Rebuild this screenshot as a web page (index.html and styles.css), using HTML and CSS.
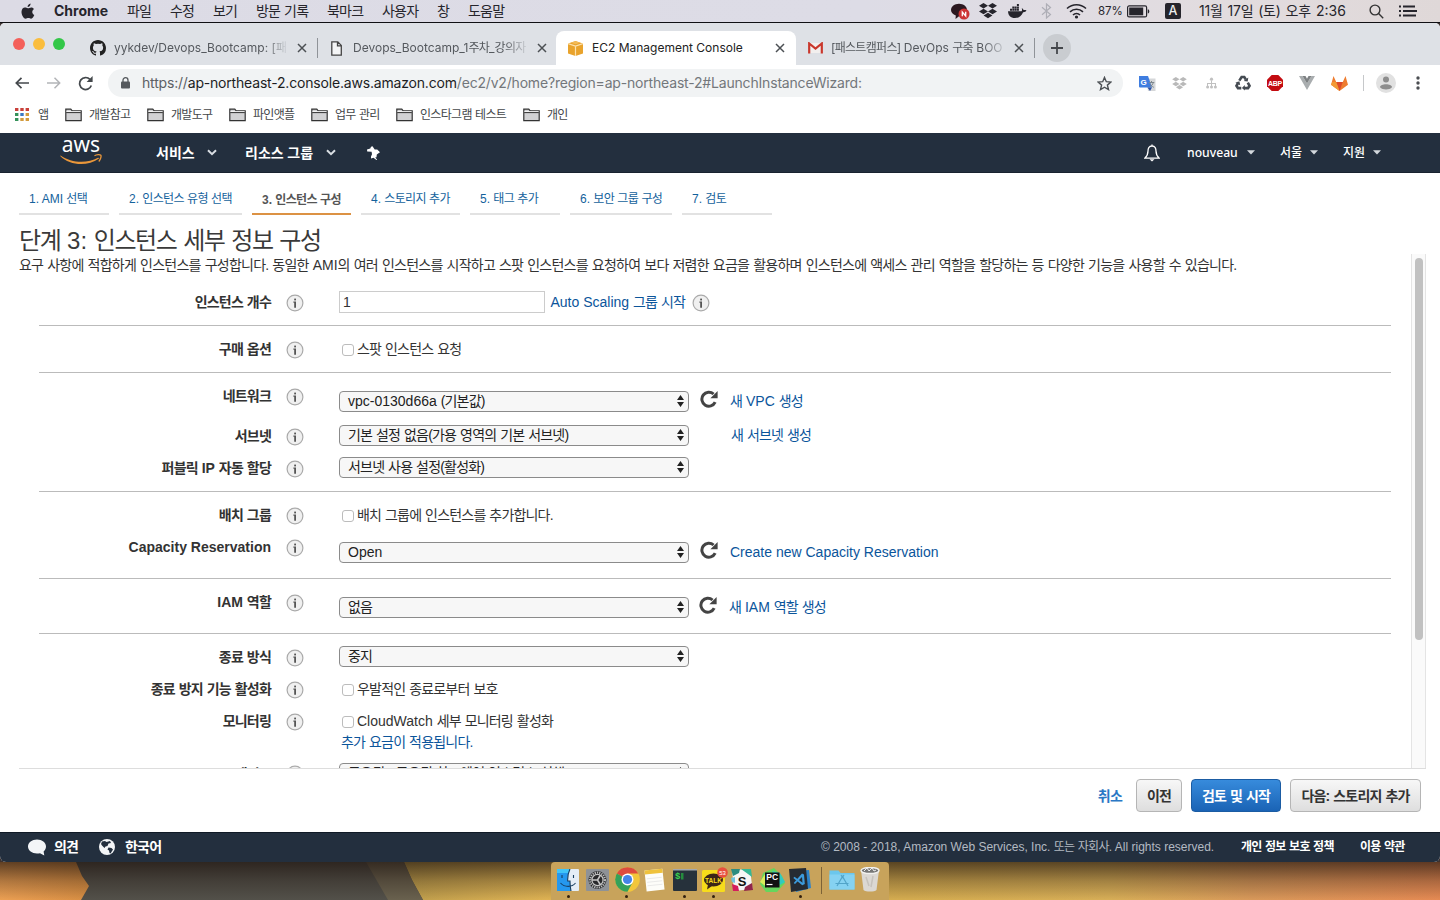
FILE: index.html
```html
<!DOCTYPE html>
<html lang="ko">
<head>
<meta charset="utf-8">
<title>EC2 Management Console</title>
<link rel="stylesheet" href="styles.css">
</head>
<body>
<svg width="0" height="0" class="defs">
  <defs>
    <symbol id="info" viewBox="0 0 18 18"><circle cx="9" cy="9" r="7.900" fill="#f0f0f0" stroke="#aaa" stroke-width="1.200"/><rect x="8.200" y="4.600" width="1.800" height="1.800" fill="#555"/><path d="M7.400 7.600h2.600v6.200H8.200V8.700h-.8z" fill="#555"/></symbol>
    <symbol id="reload" viewBox="0 0 18 18"><path d="M15.2 12.2A7 7 0 1 1 13.6 4" fill="none" stroke="#444" stroke-width="3"/><path d="M17.6 1v7.2h-7.2z" fill="#444"/></symbol>
    <symbol id="updown" viewBox="0 0 7 12"><path d="M3.500 0L7 5H0zM3.500 12L7 7H0z" fill="#222"/></symbol>
    <symbol id="folder" viewBox="0 0 17 14"><path d="M.8 12.6V1.2h5l1.4 1.600h9v9.8z" fill="#d2d2d4" stroke="#333" stroke-width="1.2"/><path d="M1.200 4.600h14.6" stroke="#333" stroke-width="1"/><path d="M1.400 3.500h4.500l1 0h8.700" stroke="#fff" stroke-width=".8"/></symbol>
    <symbol id="x" viewBox="0 0 10 10"><path d="M1 1l8 8M9 1L1 9" stroke="#4c5054" stroke-width="1.5"/></symbol>
    <symbol id="dropbox" viewBox="0 0 18 16"><path d="M4.5 0L9 2.8 4.5 5.600 0 2.800zM13.500 0L18 2.800l-4.500 2.800L9 2.800zM4.500 5.700L9 8.500l-4.500 2.800L0 8.500zM13.500 5.700L18 8.500l-4.500 2.800L9 8.500zM9 9.700l4.400 2.800L9 15.300l-4.400-2.800z"/></symbol>
    <symbol id="chev" viewBox="0 0 10 7"><path d="M1 1.2l4 4 4-4" fill="none" stroke="#d8dde2" stroke-width="2"/></symbol>
    <symbol id="caret" viewBox="0 0 8 5"><path d="M0 .3h8L4 4.6z" fill="#d3d8dd"/></symbol>
  </defs>
</svg>

<header class="menubar k">
  <svg width="14" height="17" viewBox="0 0 14 17"><path d="M9.6.4c.1 1.700-1.200 3.500-3 3.500C6.400 2.200 8 .6 9.600.4zM13.300 12c-.7 1.700-1.800 3.700-3.200 3.700-1 0-1.500-.6-2.700-.6s-1.800.6-2.700.6C2.900 15.700.4 12.100.5 8.700.6 6 2.200 4.500 3.900 4.500c1.200 0 2 .7 3 .7.900 0 1.900-.8 3.400-.8 1.100 0 2.100.6 2.700 1.500-2.500 1.500-2.100 4.900.3 6.100z" fill="#26252c"/></svg>
  <b class="l app">Chrome</b>
  <span>파일</span><span>수정</span><span>보기</span><span>방문 기록</span><span>북마크</span><span>사용자</span><span>창</span><span>도움말</span>
  <svg width="19" height="17" viewBox="0 0 19 17"><path d="M8 .8c4.500 0 8 2.800 8 6.300s-3.500 6.200-8 6.200L4.500 16l.3-3.500C2 11.300 0 9.400 0 7 0 3.600 3.600.8 8 .8z" fill="#2b1820"/><circle cx="13" cy="11" r="5.500" fill="#cc3434"/><path d="M11.300 13.300V9l3.400 4V8.700" fill="none" stroke="#fff" stroke-width="1.300"/></svg>
  <svg width="18" height="16" fill="#26252c"><use href="#dropbox"/></svg>
  <svg width="19" height="16" viewBox="0 0 19 16" fill="#26252c"><path d="M0 8.200h13.600c.6-.8.600-2 .1-3 1.200.3 1.700 1 1.800 1.900 1-.2 2-.1 3 .4-.7 1.300-2 1.800-3.400 1.700C13.500 13 11 15 7 15 2.500 15 .3 12.500 0 8.200z"/><path d="M2 5.700h2v2H2zM4.300 5.700h2v2h-2zM6.600 5.700h2v2h-2zM8.900 5.700h2v2h-2zM4.300 3.400h2v2h-2zM6.600 3.400h2v2h-2zM8.900 3.400h2v2h-2zM8.900 1.100h2v2h-2z"/></svg>
  <svg width="11" height="16" viewBox="0 0 11 16"><path d="M1 4.300l8.500 7.200-4 3.500V1l4 3.500L1 11.700" fill="none" stroke="#aeaeb6" stroke-width="1.200"/></svg>
  <svg width="21" height="16" viewBox="0 0 21 16" fill="none" stroke="#26252c" stroke-width="1.600"><path d="M1 5.500c5.500-5 13.500-5 19 0M4 8.800c3.800-3.400 9.200-3.400 13 0M7 12c2-1.800 5-1.800 7 0"/><circle cx="10.500" cy="14" r=".8" fill="#26252c"/></svg>
  <span class="l pct">87%</span>
  <svg width="23" height="13" viewBox="0 0 23 13"><rect x=".6" y=".9" width="19" height="11" rx="1.500" fill="none" stroke="#26252c" stroke-width="1.200"/><rect x="2.200" y="2.500" width="14" height="7.800" fill="#26252c"/><path d="M20.800 4.300c2 .3 2 4 0 4.300z" fill="#26252c"/></svg>
  <span class="abox l">A</span>
  <span class="date">11월 17일 (토) 오후</span>
  <span class="l clock">2:36</span>
  <svg width="15" height="15" viewBox="0 0 15 15" fill="none" stroke="#333" stroke-width="1.400"><circle cx="6" cy="6" r="4.900"/><path d="M9.600 9.600l4.600 4.600"/></svg>
  <svg width="18" height="12" viewBox="0 0 18 12" stroke="#26252c" stroke-width="1.800"><path d="M0 1.500h2M0 6h2M0 10.500h2M4 1.500h12M4 6h14M4 10.500h13"/></svg>
</header>

<div class="window">
<div class="strip">
  <i class="light red"></i><i class="light yel"></i><i class="light grn"></i>
  <div class="tab t1">
    <svg width="16" height="16" viewBox="0 0 16 16"><path d="M8 0C3.580 0 0 3.580 0 8c0 3.540 2.290 6.530 5.470 7.590.4.070.55-.17.55-.38v-1.500c-2.010.37-2.530-.49-2.690-.94-.09-.23-.48-.94-.82-1.130-.28-.15-.68-.52-.01-.53.63-.01 1.080.58 1.230.82.72 1.210 1.870.87 2.330.66.070-.52.280-.87.510-1.070-1.780-.2-3.640-.89-3.640-3.950 0-.87.310-1.590.82-2.150-.08-.2-.36-1.020.08-2.120 0 0 .67-.21 2.200.82a7.600 7.600 0 014 0c1.530-1.040 2.200-.82 2.200-.82.440 1.100.160 1.920.080 2.120.51.560.82 1.270.82 2.150 0 3.070-1.870 3.750-3.650 3.950.29.250.54.730.54 1.480v2.200c0 .21.150.46.550.38A8 8 0 0016 8c0-4.420-3.580-8-8-8z" fill="#222"/></svg>
    <span class="title fade">yykdev/Devops_Bootcamp: [패</span><svg width="10" height="10"><use href="#x"/></svg></div>
  <div class="tab t2">
    <svg width="11" height="15" viewBox="0 0 11 15"><path d="M.8.800h6l3.500 3.600v9.700H.8zM6.500.8v4h4" fill="#f4f5f6" stroke="#444" stroke-width="1.300"/></svg>
    <span class="title fade">Devops_Bootcamp_1<span class="k">주차</span>_<span class="k">강의자</span></span><svg width="10" height="10"><use href="#x"/></svg></div>
  <div class="tab t3">
    <svg width="15" height="15" viewBox="0 0 15 15"><path d="M0 2.500L7.500 0 15 2.500v10L7.500 15 0 12.500z" fill="#e9a32c"/><path d="M0 2.500L7.500 5 15 2.500M7.500 5v10" stroke="#fbe1ae" stroke-width="1.200" fill="none"/><path d="M3 1.700l4.500 1.500L12 1.700 7.500.2z" fill="#f3bb58"/></svg>
    <span class="title">EC2 Management Console</span><svg width="10" height="10"><use href="#x"/></svg></div>
  <div class="tab t4">
    <svg width="15" height="12" viewBox="0 0 15 12"><path d="M2 1h11v10H2z" fill="#f2efee"/><path d="M1.200 11.500V1.500l6.300 5 6.300-5v10" fill="none" stroke="#c9372c" stroke-width="2.200"/></svg>
    <span class="title fade"><span class="k">[패스트캠퍼스]</span> DevOps <span class="k">구축</span> BOO</span><svg width="10" height="10"><use href="#x"/></svg></div>
  <div class="plus"><svg width="12" height="12" viewBox="0 0 12 12"><path d="M6 0v12M0 6h12" stroke="#44474b" stroke-width="1.800"/></svg></div>
</div>

<div class="toolbar">
  <svg width="14" height="12" viewBox="0 0 14 12" fill="none" stroke="#44484c" stroke-width="1.700"><path d="M14 6H1.500M6.500.8L1.300 6l5.200 5.200"/></svg>
  <svg width="14" height="12" viewBox="0 0 14 12" fill="none" stroke="#b3b5b8" stroke-width="1.500"><path d="M0 6h12.500M7.500.8L12.700 6l-5.200 5.200"/></svg>
  <svg width="16" height="15" viewBox="0 0 16 15"><path d="M13.300 9.500A6 6 0 1 1 12 3.400" fill="none" stroke="#44484c" stroke-width="1.700"/><path d="M14.600 0v6H8.600z" fill="#44484c"/></svg>
  <div class="omni">
    <svg width="9" height="12" viewBox="0 0 9 12"><rect y="4.500" width="9" height="7" rx="1" fill="#55595d"/><path d="M2 5V3.200a2.500 2.500 0 015 0V5" fill="none" stroke="#55595d" stroke-width="1.300"/></svg>
    <span class="url"><span class="dim">https://</span><span class="host">ap-northeast-2.console.aws.amazon.com</span>/ec2/v2/home?region=ap-northeast-2#LaunchInstanceWizard:</span>
    <svg width="15" height="15" viewBox="0 0 15 15"><path d="M7.500 1.400l1.800 4.300 4.600.4-3.500 3 1.100 4.500-4-2.400-4 2.400 1.100-4.500-3.500-3 4.600-.4z" fill="none" stroke="#4c5054" stroke-width="1.400"/></svg>
  </div>
  <svg width="17" height="17" viewBox="0 0 17 17"><path d="M7 3.500h9.500V16H9z" fill="#d5d7d9"/><path d="M0 1h9l4 11.500H1a1 1 0 01-1-1z" fill="#3f7de0"/><path d="M8.500 12.500H13L11 16z" fill="#2b50a8"/><text x="1.600" y="9.600" class="gtxt">G</text><path d="M9.800 7.500h5.500M12.500 6v1.500M14.300 7.500c-.5 2-2 3.500-3.300 4.500M11 8.500c.8 1.800 2 3 3.800 3.800" fill="none" stroke="#7d868d"/></svg>
  <svg width="15" height="13" fill="#b9b9b9"><use href="#dropbox"/></svg>
  <svg width="11" height="12" viewBox="0 0 11 12" fill="#c0c0c0"><circle cx="5.500" cy="2.200" r="1.600"/><path d="M5 3.500h1V6h4v3H9V7H6v2H5V7H2v2H1V6h4z"/><circle cx="1.600" cy="9.900" r="1.500"/><circle cx="5.500" cy="9.900" r="1.500"/><circle cx="9.400" cy="9.900" r="1.500"/></svg>
  <svg width="16" height="16" viewBox="0 0 16 16" fill="none" stroke="#454b52" stroke-width="2.600"><path d="M4.300 5.600L6.600 2h2.700l1.600 2.700M12.800 7.600l1.700 3.200-1.500 2.300H9M6.300 13.100H3l-1.500-2.300 1.900-3.400"/><path d="M8.700 6l4 .6.600-4zM9.800 10v5.600L6.900 12.900zM.4 7.700l4-1.500.8 4z" fill="#454b52" stroke="none"/></svg>
  <svg width="16" height="16" viewBox="0 0 16 16"><path d="M4.700 0h6.600L16 4.700v6.600L11.300 16H4.700L0 11.300V4.700z" fill="#c30c11"/><text x="8" y="10.900" class="abp">ABP</text></svg>
  <svg width="16" height="14" viewBox="0 0 16 14"><path d="M0 0h3.500L8 7.600 12.500 0H16L8 14z" fill="#a9adaf"/><path d="M3.500 0h3L8 2.700 9.500 0h3L8 7.600z" fill="#7d8183"/></svg>
  <svg width="17" height="15" viewBox="0 0 17 15"><path d="M8.500 15L0 8.700 2.500 0l2.700 6h6.600l2.700-6L17 8.700z" fill="#ee7d30"/><path d="M5.200 6h6.600L8.500 15z" fill="#dd4a2a"/><path d="M0 8.700L1.300 6h3.900L8.500 15zM17 8.700L15.700 6" fill="#f29a35"/></svg>
  <i class="vsep"></i>
  <svg width="20" height="20" viewBox="0 0 20 20"><circle cx="10" cy="10" r="10" fill="#e1e1e1"/><circle cx="10" cy="6.500" r="3" fill="#8d8d8d"/><path d="M4 14.200c0-4 12-4 12 0-2.500 3-9.500 3-12 0z" fill="#8d8d8d"/></svg>
  <svg width="4" height="14" viewBox="0 0 4 14" fill="#4b4e52"><circle cx="2" cy="2" r="1.700"/><circle cx="2" cy="7" r="1.700"/><circle cx="2" cy="12" r="1.700"/></svg>
</div>

<div class="bookmarks k">
  <svg width="14" height="13" viewBox="0 0 14 13"><path d="M0 0h3.400v3H0zM5.300 0h3.400v3H5.300zM10.600 0H14v3h-3.400z" fill="#c9403a"/><path d="M0 5h3.400v3H0z" fill="#35925a"/><path d="M5.300 5h3.400v3H5.300z" fill="#3a79c4"/><path d="M10.600 5H14v3h-3.400z" fill="#d39b3c"/><path d="M0 10h3.400v3H0z" fill="#35925a"/><path d="M5.300 10h3.400v3H5.300zM10.600 10H14v3h-3.400z" fill="#d39b3c"/></svg><span>앱</span>
  <svg width="17" height="14"><use href="#folder"/></svg><span>개발참고</span>
  <svg width="17" height="14"><use href="#folder"/></svg><span>개발도구</span>
  <svg width="17" height="14"><use href="#folder"/></svg><span>파인앳플</span>
  <svg width="17" height="14"><use href="#folder"/></svg><span>업무 관리</span>
  <svg width="17" height="14"><use href="#folder"/></svg><span>인스타그램 테스트</span>
  <svg width="17" height="14"><use href="#folder"/></svg><span>개인</span>
</div>

<nav class="awsnav">
  <div class="logo"><span>aws</span><svg width="42" height="11" viewBox="0 0 42 11"><path d="M.6 1.500C11 9 27 10 38 3.800c.8-.4 1.300.4.700.9C28 12.500 10 12 .2 2z" fill="#e8963a"/><path d="M34.500 1.800c2-1.300 5.500-1.400 6.300-.6.7.9-.3 4.600-2 6.300" fill="none" stroke="#e8963a" stroke-width="1.300"/></svg></div>
  <b>서비스</b><svg width="10" height="7"><use href="#chev"/></svg>
  <b>리소스 그룹</b><svg width="10" height="7"><use href="#chev"/></svg>
  <svg width="13" height="14" viewBox="0 0 13 14"><path d="M5.500.3l2.200 3.300 2.500-.2L13 6.300 9.800 8.400l-.3 2.800-1.300.3 2 2.300-.8.200-2.900-2.300-2.400.7-.2-1.600L5 8.200 4.600 5.700.2 5.400 0 3.400l3.300-.8L4 .8z" fill="#fff"/></svg>
  <svg width="16" height="18" viewBox="0 0 16 18"><path d="M8 2C4.800 2 4 4.500 4 7c0 4-1.200 5.300-3.200 7.200h14.400C13.200 12.300 12 11 12 7c0-2.500-.8-5-4-5zM8 .5V2" fill="none" stroke="#fff" stroke-width="1.300"/><path d="M5.500 15.200h5L8 17.400z" fill="#fff"/></svg>
  <span class="usr">nouveau</span><svg width="8" height="5"><use href="#caret"/></svg>
  <span class="sm">서울</span><svg width="8" height="5"><use href="#caret"/></svg>
  <span class="sm">지원</span><svg width="8" height="5"><use href="#caret"/></svg>
</nav>

<main class="page">
  <ol class="steps k">
    <li class="w90"><span class="l">1. AMI</span> 선택</li><li class="w123"><span class="l">2.</span> 인스턴스 유형 선택</li><li class="w99 on"><span class="l">3.</span> 인스턴스 구성</li><li class="w99"><span class="l">4.</span> 스토리지 추가</li><li class="w90"><span class="l">5.</span> 태그 추가</li><li class="w102"><span class="l">6.</span> 보안 그룹 구성</li><li class="w90"><span class="l">7.</span> 검토</li>
  </ol>
  <h1 class="k">단계 <span class="l">3:</span> 인스턴스 세부 정보 구성</h1>
  <div class="scroller">
    <div class="content">
      <p class="desc k">요구 사항에 적합하게 인스턴스를 구성합니다. 동일한 <span class="l">AMI</span>의 여러 인스턴스를 시작하고 스팟 인스턴스를 요청하여 보다 저렴한 요금을 활용하며 인스턴스에 액세스 관리 역할을 할당하는 등 다양한 기능을 사용할 수 있습니다.</p>
      <section class="first">
        <div class="row"><b class="k">인스턴스 개수</b><svg class="inf"><use href="#info"/></svg><div class="ctl"><span class="input">1</span><a class="asg">Auto Scaling <span class="k">그룹 시작</span></a><svg class="inf"><use href="#info"/></svg></div></div>
      </section>
      <section>
        <div class="row"><b class="k">구매 옵션</b><svg class="inf"><use href="#info"/></svg><div class="ctl"><i class="chk"></i><span class="k">스팟 인스턴스 요청</span></div></div>
      </section>
      <section>
        <div class="row tall"><b class="k">네트워크</b><svg class="inf"><use href="#info"/></svg><div class="ctl low"><span class="select">vpc-0130d66a <span class="k">(기본값)</span><svg class="arr"><use href="#updown"/></svg></span><svg class="rel"><use href="#reload"/></svg><a class="k">새 <span class="l">VPC</span> 생성</a></div></div>
        <div class="row"><b class="k">서브넷</b><svg class="inf"><use href="#info"/></svg><div class="ctl up"><span class="select k">기본 설정 없음(가용 영역의 기본 서브넷)<svg class="arr"><use href="#updown"/></svg></span><a class="k alone">새 서브넷 생성</a></div></div>
        <div class="row"><b class="k">퍼블릭 <span class="l">IP</span> 자동 할당</b><svg class="inf"><use href="#info"/></svg><div class="ctl up"><span class="select k">서브넷 사용 설정(활성화)<svg class="arr"><use href="#updown"/></svg></span></div></div>
      </section>
      <section class="loose">
        <div class="row"><b class="k">배치 그룹</b><svg class="inf"><use href="#info"/></svg><div class="ctl"><i class="chk"></i><span class="k">배치 그룹에 인스턴스를 추가합니다.</span></div></div>
        <div class="row"><b>Capacity Reservation</b><svg class="inf"><use href="#info"/></svg><div class="ctl low"><span class="select">Open<svg class="arr"><use href="#updown"/></svg></span><svg class="rel"><use href="#reload"/></svg><a>Create new Capacity Reservation</a></div></div>
      </section>
      <section class="loose">
        <div class="row"><b class="k"><span class="l">IAM</span> 역할</b><svg class="inf"><use href="#info"/></svg><div class="ctl low iam"><span class="select k">없음<svg class="arr"><use href="#updown"/></svg></span><svg class="rel"><use href="#reload"/></svg><a class="k">새 <span class="l">IAM</span> 역할 생성</a></div></div>
      </section>
      <section class="last">
        <div class="row"><b class="k">종료 방식</b><svg class="inf"><use href="#info"/></svg><div class="ctl up"><span class="select k">중지<svg class="arr"><use href="#updown"/></svg></span></div></div>
        <div class="row"><b class="k">종료 방지 기능 활성화</b><svg class="inf"><use href="#info"/></svg><div class="ctl"><i class="chk"></i><span class="k">우발적인 종료로부터 보호</span></div></div>
        <div class="row mon"><b class="k">모니터링</b><svg class="inf"><use href="#info"/></svg><div class="two"><div class="ctl"><i class="chk"></i><span class="k"><span class="l">CloudWatch</span> 세부 모니터링 활성화</span></div><a class="k">추가 요금이 적용됩니다.</a></div></div>
        <div class="row ten"><b class="k">테넌시</b><svg class="inf"><use href="#info"/></svg><div class="ctl"><span class="select k">공유됨 - 공유된 하드웨어 인스턴스 실행<svg class="arr"><use href="#updown"/></svg></span></div></div>
      </section>
    </div>
    <div class="track"><i></i></div>
  </div>
  <div class="actions k"><a>취소</a><button>이전</button><button class="primary">검토 및 시작</button><button>다음: 스토리지 추가</button></div>
</main>

<footer class="foot">
  <svg width="18" height="17" viewBox="0 0 18 17"><path d="M9 .5c5 0 9 3 9 7 0 2-1 3.700-2.400 5l.7 4L12 14.200c-1 .3-2 .3-3 .3-5 0-9-3-9-7s4-7 9-7z" fill="#f3f5f7"/></svg><b class="k">의견</b>
  <svg width="16" height="16" viewBox="0 0 16 16"><circle cx="8" cy="8" r="8" fill="#f3f5f7"/><path d="M3 2.500l3-.5 1.500 1L11 2l1 2-2.500.5-1 2.500-2 .5L5.500 9 3 6.500 2 5zM9.500 8.500l3 .5 1.500 1.500-2.500 4-1-.5-.5-2.500-1.500-1z" fill="#232f3e"/></svg><b class="k">한국어</b>
  <span class="copy"><span class="l">© 2008 - 2018, Amazon Web Services, Inc.</span> <span class="k">또는 자회사.</span> <span class="l">All rights reserved.</span></span>
  <b class="k f12">개인 정보 보호 정책</b><b class="k f12">이용 약관</b>
</footer>
</div>

<div class="desk">
  <svg class="wall" width="1440" height="38" viewBox="0 0 1440 38">
    <defs>
      <linearGradient id="sand"><stop offset="0" stop-color="#f0a355"/><stop offset=".06" stop-color="#dd9245"/><stop offset=".28" stop-color="#c2a14e"/><stop offset=".38" stop-color="#e3b655"/><stop offset=".63" stop-color="#d9b052"/><stop offset=".77" stop-color="#dcb259"/><stop offset=".87" stop-color="#dd9c5c"/><stop offset="1" stop-color="#ea8d55"/></linearGradient>
      <linearGradient id="shade" x2="0" y2="1"><stop offset="0" stop-color="#1c110c" stop-opacity=".68"/><stop offset=".5" stop-color="#1c110c" stop-opacity=".3"/><stop offset="1" stop-color="#1c110c" stop-opacity=".02"/></linearGradient>
    </defs>
    <path d="M0 0h1440v38H0z" fill="url(#sand)"/>
    <path d="M76 0l6 14 7 10-8 14h342L412 18 404 0z" fill="#54524b"/>
    <path d="M366 0l22 38h35L412 18 404 0z" fill="#6b6350"/>
    <path d="M0 0h1440v38H0z" fill="url(#shade)"/>
  </svg>
  <div class="dock">
    <div class="on"><svg width="22" height="22" viewBox="0 0 22 22"><rect width="22" height="22" rx="1" fill="#e4edf6"/><path d="M0 0h13c-2 4-2.500 8-2.300 12H13c0 4 .3 7 1 10H0z" fill="#2598ee"/><path d="M0 0h13l-1.500 4H0z" fill="#41c5f8"/><path d="M5 6v3M16.500 6v3M3.500 14c4 4.500 11.500 4.500 15 0M13 0c-2 4-2.500 8-2.300 12H13c0 4 .3 7 1 10" fill="none" stroke="#183e60" stroke-width="1.100"/></svg></div>
    <div><svg width="23" height="22" viewBox="0 0 23 22"><rect width="23" height="22" rx="1" fill="#8e9297"/><circle cx="11.500" cy="11" r="9" fill="#27292b"/><circle cx="11.500" cy="11" r="7.500" fill="none" stroke="#bbb" stroke-width="2" stroke-dasharray="1.300 1"/><circle cx="11.500" cy="11" r="5.600" fill="#28292b" stroke="#c6c6c6" stroke-width="1.300"/><path d="M11.500 11L6 11M11.500 11l3-5M11.500 11l3 5" stroke="#c6c6c6" stroke-width="1.500"/></svg></div>
    <div class="on"><svg width="25" height="25" viewBox="0 0 25 25"><circle cx="12.500" cy="12.500" r="12.300" fill="#f2c63a"/><path d="M12.500 12.500L1.800 6.400A12.300 12.300 0 0 1 23.200 6.400H12.500z" fill="#dd4b3e"/><path d="M1.800 6.400A12.300 12.300 0 0 0 12.500 24.800l5-9.300-5-3z" fill="#35a15a"/><circle cx="12.500" cy="12.500" r="6" fill="#fff"/><circle cx="12.500" cy="12.500" r="4.600" fill="#4484e8"/></svg></div>
    <div><svg width="22" height="24" viewBox="0 0 22 24"><g transform="rotate(-6 11 12)"><path d="M1.500 1.500h18v21h-18z" fill="#fdfdf9"/><path d="M1.500 1.500h18v4h-18z" fill="#efc23b"/><path d="M3 10h15M3 13.500h15M3 17h15" stroke="#ddd" stroke-width=".6"/></g></svg></div>
    <div class="on"><svg width="24" height="22" viewBox="0 0 24 22"><rect width="24" height="22" rx="1" fill="#26313b"/><path d="M0 0h24v1.500H0z" fill="#a4a9ad"/><text x="2" y="10" class="term">$</text><path d="M8 4h2.500v6.500H8z" fill="#258b3e"/></svg></div>
    <div class="on"><svg width="27" height="26" viewBox="0 0 27 26"><rect y="3" width="23" height="22" rx="1.500" fill="#f7dc1b"/><ellipse cx="11.500" cy="13" rx="9.500" ry="6.500" fill="#3b2618"/><path d="M6 17.500l-1 5 5-3.500z" fill="#3b2618"/><text x="11.500" y="15.800" class="talk">TALK</text><circle cx="20.500" cy="5.500" r="5.300" fill="#e84f3e"/><text x="20.500" y="7.800" class="badge">53</text></svg></div>
    <div><svg width="22" height="22" viewBox="0 0 22 22"><path d="M1 1l18-1 2.500 20L3 22z" fill="#f5f5f5"/><path d="M0 0h9l-1 4-6 3z" fill="#2c8c80"/><path d="M10 0h10l1 8-4-3z" fill="#36b795"/><path d="M1 15l6 2 1 5H2z" fill="#d51e5c"/><path d="M14 18l7-4 1 7-9 1z" fill="#91254b"/><path d="M0 9l4-1v6l-3-1z" fill="#72c4dd"/><text x="11" y="16.500" class="slack">S</text></svg></div>
    <div><svg width="25" height="24" viewBox="0 0 25 24"><path d="M3 5L14 0l8 8 3 7-8 9H6l-6-8z" fill="#65d65d"/><path d="M12 3l8 2 5 9-5 3z" fill="#31c9c0"/><path d="M0 14l5-8 3 14z" fill="#d9ed5a"/><rect x="5" y="4.500" width="14.500" height="15" fill="#111"/><text x="6.300" y="12.300" class="pc">PC</text><path d="M6.500 16.500h6" stroke="#fff" stroke-width="1.200"/></svg></div>
    <div class="on"><svg width="22" height="24" viewBox="0 0 22 24"><path d="M4 3l16-1 2 18-15 4z" fill="#2b82c9"/><path d="M0 1l17-1 2 21-17 3z" fill="#252b32"/><path d="M13 5.500l2 1 .8 9.500-2.500 1.300-9-7.300 1.200-1.200 8 6L13 9l-7 7-1.300-1z" fill="#3c9bdc"/></svg></div>
    <i class="bar"></i>
    <div><svg width="26" height="21" viewBox="0 0 26 21"><path d="M.500 1.500h9l2 2.500h14v16.500H.500z" fill="#6bc7ed"/><path d="M.5 5.500h25v15H.5z" fill="#85d2f2"/><path d="M8 17l5.500-9.500L19 17M6.500 14.500h13M12 6l1.500 2.300L15 6" fill="none" stroke="#51a4c9" stroke-width="1.200"/></svg></div>
    <div><svg width="20" height="25" viewBox="0 0 20 25"><path d="M1 3h18l-2.500 20c-2 2-11 2-13 0z" fill="#dbd8d4"/><path d="M6 10l3 9M13 9l-2 11" stroke="#c6c2bd" stroke-width="1.500"/><ellipse cx="10" cy="3.500" rx="9" ry="3" fill="#777" stroke="#f1f1ef" stroke-width="1.400"/><path d="M4 4l3-3 2 3 3-3 2 3 2-1" fill="none" stroke="#eee"/></svg></div>
  </div>
</div>
</body>
</html>
```
FILE: styles.css
```css
* { box-sizing: border-box; }
body { margin: 0; width: 1440px; height: 900px; overflow: hidden; background: #3c3230; color: #333; font: 14px/20px "Liberation Sans", "Noto Sans CJK KR", sans-serif; white-space: nowrap; }
svg { display: block; flex: none; }
.defs { position: absolute; }
.k { letter-spacing: -.058em; word-spacing: .058em; }
.l { letter-spacing: 0; word-spacing: 0; }
a { color: #0b559b; }
i { font-style: normal; }

.menubar { height: 23px; display: grid; align-items: center; padding-left: 21px; border-bottom: 1px solid #101014; background: linear-gradient(90deg, #dcdbe5, #dddce6 60%, #e2dcdf 85%, #dfd8d8); color: #26252c; font-family: Inter, "Noto Sans CJK KR", sans-serif; line-height: 22px;
  grid-template-columns: 33px 73px 43px 43px 43px 71px 55px 55px 31px 483px 28px 29px 33px 25px 32px 29px 38px 34px 117px 53px 30px 1fr; }
.app { font-size: 14px; }
.pct { font-size: 11.500px; }
.abox { width: 16px; height: 16px; border-radius: 2px; background: #26252c; color: #eee; text-align: center; line-height: 16px; font-size: 12.500px; font-weight: 500; }
.date { letter-spacing: -.01em; }
.clock { font-size: 14px; }

.window { height: 839px; background: #fff; border-radius: 5px 5px 6px 6px; overflow: hidden; position: relative; }
.strip { height: 42px; display: flex; align-items: flex-end; background: #dee1e6; padding-left: 13px; }
.light { width: 12px; height: 12px; border-radius: 50%; margin: 0 8px 15px 0; }
.red { background: #f4605a; } .yel { background: #fabd3d; } .grn { background: #33c748; }
.tab { height: 34px; display: flex; align-items: center; font: 12px/20px Inter, "Noto Sans CJK KR", sans-serif; color: #55595e; position: relative; }
.title { flex: none; }
.fade { -webkit-mask-image: linear-gradient(90deg, #000 86%, transparent); mask-image: linear-gradient(90deg, #000 86%, transparent); }
.t1 { width: 245px; padding-left: 17px; }
.t1 .title { width: 175px; margin: 0 8px 0 8px; }
.t2 { width: 238px; padding-left: 13px; }
.t2 .title { width: 177px; margin: 0 7px 0 11px; }
.t1::after, .t4::after { content: ""; width: 1px; height: 20px; background: #8f9398; margin-left: auto; }
.t3 { width: 240px; padding-left: 12px; background: #fff; border-radius: 8px 8px 0 0; color: #222; }
.t3 .title { width: 174px; margin: 0 9px 0 9px; }
.t4 { width: 239px; padding-left: 12px; }
.t4 .title { width: 177px; margin: 0 6px 0 8px; }
.plus { width: 28px; height: 28px; border-radius: 50%; background: #c9ccd0; display: flex; align-items: center; justify-content: center; margin: 0 0 3px 8px; }

.toolbar { height: 36px; display: grid; align-items: center; padding-left: 15px; grid-template-columns: 32px 31px 30px 1031px 33px 34px 29px 32px 32px 32px 32px 13px 40px 1fr; }
.omni { width: 1015px; height: 28px; background: #f1f3f4; border-radius: 14px; display: flex; align-items: center; padding: 0 11px 0 13px; }
.url { font: 14px/20px Inter, sans-serif; letter-spacing: -.185px; color: #73777b; margin-left: 12px; flex: 1; }
.host { color: #1c1d1f; } .dim { color: #5c6064; }
.vsep { width: 1px; height: 16px; background: #c6c8ca; }
.gtxt { font: bold 8px "Liberation Sans", sans-serif; fill: #fff; }
.abp { font: bold 7px "Liberation Sans", sans-serif; fill: #fff; text-anchor: middle; letter-spacing: -.3px; }

.bookmarks { height: 31px; padding-bottom: 4px; display: grid; align-items: center; padding-left: 15px; font-size: 12px; color: #44474a; grid-template-columns: 23px 27px 24px 58px 24px 58px 24px 58px 24px 61px 24px 103px 24px 1fr; }

.awsnav { margin-top: 1px; height: 40px; background: #232f3e; border-bottom: 1px solid #18222f; color: #fff; display: grid; align-items: center; padding-left: 60px; font-family: "Noto Sans", "Noto Sans CJK KR", sans-serif; grid-template-columns: 96px 51px 38px 81px 41px 777px 43px 60px 33px 30px 33px 30px 1fr; }
.logo { width: 42px; height: 30px; margin-top: -6px; }
.logo span { display: block; font-size: 21px; line-height: 18px; height: 19px; text-align: center; }
.usr { font-size: 12.200px; font-weight: 500; }
.sm { font-size: 12px; font-weight: 500; }

.page { height: 659px; padding: 14px 14px 0 19px; }
.steps { list-style: none; margin: 0; padding: 0; display: flex; gap: 10px; font-size: 12px; color: #14629c; height: 28px; }
.steps li { border-bottom: 2px solid #e2e2e2; padding-left: 10px; height: 28px; line-height: 24px; }
.steps .on { border-color: #dc9244; color: #555; font-weight: bold; line-height: 26px; }
.w90 { width: 90px; } .w123 { width: 123px; } .w99 { width: 99px; } .w102 { width: 102px; }
h1 { font-size: 24px; font-weight: 400; line-height: 28px; height: 28px; margin: 12px 0 -1px; color: #3a3a3a; }
.scroller { height: 515px; display: flex; border-bottom: 1px solid #ddd; overflow: hidden; }
.content { width: 1392px; height: 514px; overflow: hidden; }
.desc { margin: 0; height: 24px; line-height: 22px; letter-spacing: -.054em; word-spacing: .06em; }
.track { width: 15px; border: solid #e4e4e4; border-width: 0 1px; background: #fafafa; padding: 4px 0 0 3px; }
.track i { display: block; width: 8px; height: 382px; border-radius: 4px; background: #c1c1c1; }
section { margin: 0 20px; border-bottom: 1px solid #bbb; padding: 7px 0; }
.first { padding-top: 8px; } .loose { padding-bottom: 15px; } .last { border: 0; }
.row { height: 32px; display: grid; grid-template-columns: 232px 68px 1fr; align-items: start; }
.row b { text-align: right; line-height: 32px; }
.tall { height: 40px; }
.mon { height: 52px; }
.ten b { line-height: 34px; }
.inf { width: 18px; height: 18px; margin: 8px 0 0 14.500px; }
.ctl { height: 32px; display: flex; align-items: center; }
.ctl .inf { margin: 2px 0 0 7px; }
.low { padding-top: 10px; } .up { height: 30px; }
.input { width: 206px; height: 22px; border: 1px solid #ccc; padding-left: 3px; line-height: 21px; margin-right: 5.500px; }
.chk { width: 12px; height: 12px; border: 1px solid #bcbcbc; border-radius: 3px; margin: 2px 3px 0 3px; }
.select { width: 350px; height: 21px; border: 1px solid #8b8b8b; border-radius: 4px; background: #f7f7f7; padding: 0 4px 0 8px; line-height: 18px; display: flex; align-items: center; color: #222; white-space: pre; }
.arr { margin-left: auto; width: 7px; height: 12px; }
.rel { width: 18px; height: 18px; margin: -5px 12px 0 11px; }
.iam .rel { margin: -5px 12px 0 10px; }
.alone { margin-left: 42px; }
.two a { display: block; margin: -5px 0 0 2px; line-height: 20px; }

.actions { display: flex; justify-content: flex-end; align-items: center; height: 33px; margin: 10px 5px 0 0; font-weight: bold; }
.actions a { color: #2a78c5; margin-right: 14px; }
.actions button { height: 33px; padding: 0; width: 46px; margin-right: 9px; border: 1px solid #b5b5b5; border-radius: 4px; background: linear-gradient(#f7f7f7, #dedede); color: #333; font: inherit; letter-spacing: inherit; word-spacing: inherit; }
.actions .primary { width: 90px; background: linear-gradient(#378bdc, #1a63b5); border-color: #1b5ca3; color: #fff; }
.actions button:last-child { width: 131px; margin-right: 0; }

.foot { height: 30px; background: #232f3e; border-top: 1px solid #101a26; color: #fff; display: grid; align-items: center; padding: 0 0 1px 28px; grid-template-columns: 26px 45px 26px 696px 420px 119px 1fr; }
.copy { font-size: 12px; color: #b3bac2; }
.f12 { font-size: 12px; }

.desk { height: 38px; display: flex; padding-left: 551px; position: relative; }
.wall { position: absolute; left: 0; top: 0; }
.dock { position: relative; width: 338px; height: 38px; background: #c8a35b; border-radius: 4px 4px 0 0; display: grid; padding-left: 6px; padding-top: 1px; grid-template-columns: 29px 29px 29px 29px 29px 29px 29px 29px 32px 8px 31px 1fr; }
.dock div { height: 37px; display: flex; flex-direction: column; align-items: flex-start; justify-content: center; padding-bottom: 4px; position: relative; }
.dock .on::after { content: ""; position: absolute; width: 3px; height: 3px; border-radius: 50%; background: #33200f; left: 10px; bottom: 2px; }
.bar { width: 1px; height: 27px; margin-top: 4px; background: #7d6337; }
.term { font: bold 9px "Liberation Mono", monospace; fill: #3bd34e; }
.talk { font: bold 6.500px "Liberation Sans", sans-serif; fill: #f7dc1b; text-anchor: middle; }
.badge { font: 6px "Liberation Sans", sans-serif; fill: #fff; text-anchor: middle; }
.slack { font: bold 13px "Liberation Sans", sans-serif; fill: #111; text-anchor: middle; }
.pc { font: bold 8.500px "Liberation Sans", sans-serif; fill: #fff; }
```
